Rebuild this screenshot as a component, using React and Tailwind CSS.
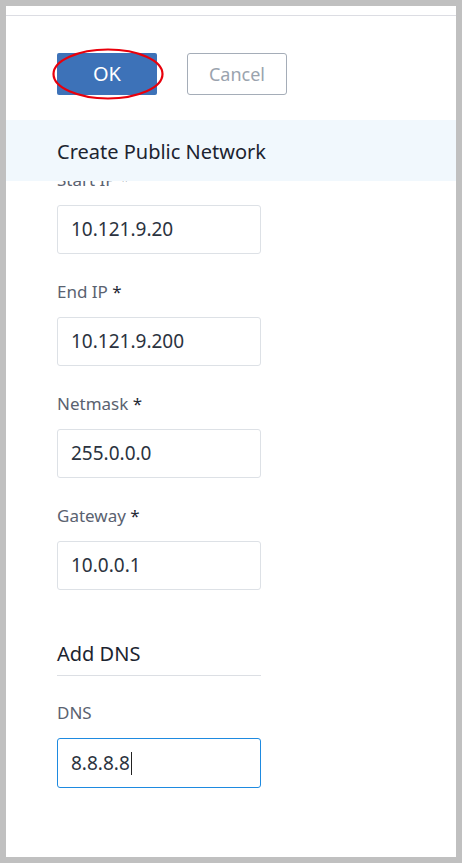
import React from "react";

const FIELDS = [
  { label: "End IP", value: "10.121.9.200" },
  { label: "Netmask", value: "255.0.0.0" },
  { label: "Gateway", value: "10.0.0.1" },
];

function Label({ children, required }) {
  return (
    <div className="h-[24px] text-[17px] leading-[24px] text-[#5a6270]">
      {children} {required && <span className="text-[#1f2a36]">*</span>}
    </div>
  );
}

function Input({ value }) {
  return (
    <div className="mt-[13px] w-[204px] h-[49px] border border-[#dde1e6] rounded-[3px] flex items-center px-[13px] text-[19px] text-[#2b3340]">
      {value}
    </div>
  );
}

export default function App() {
  return (
    <div
      className="w-[462px] h-[863px] bg-[#c0c0c0] p-[6px]"
      style={{ fontFamily: '"Noto Sans", "Open Sans", sans-serif' }}
    >
      <div className="w-full h-full bg-white overflow-hidden">
        <div className="h-[10px] border-b border-[#dcdde3]" />
        {/* buttons */}
        <div className="flex gap-[30px] pl-[51px] pt-[37px]">
          <div className="relative">
            <button className="w-[100px] h-[42px] bg-[#3d72b8] rounded-[2px] text-white text-[20px]">
              OK
            </button>
            <svg
              className="absolute left-[-5px] top-[-5px]"
              width="112"
              height="52"
              viewBox="0 0 112 52"
            >
              <ellipse cx="56" cy="26" rx="54.5" ry="24.5" fill="none" stroke="#e8000b" strokeWidth="2.2" />
            </svg>
          </div>
          <button className="w-[100px] h-[42px] border border-[#a5adb8] rounded-[3px] text-[#9aa3ae] text-[18px]">
            Cancel
          </button>
        </div>

        {/* form */}
        <div className="mt-[25px]">
          <div className="relative z-10 h-[61px] bg-[#f1f8fd] flex items-center pl-[51px] pt-[2px] text-[20px] text-[#1c2430]">
            Create Public Network
          </div>
          <div className="pl-[51px]">
            <div className="relative z-0 mt-[-13px]">
              <Label required>Start IP</Label>
              <Input value="10.121.9.20" />
            </div>
            {FIELDS.map((f) => (
              <div key={f.label} className="mt-[26px]">
                <Label required>{f.label}</Label>
                <Input value={f.value} />
              </div>
            ))}

            <div className="mt-[51px] w-[204px] border-b border-[#dcdfe4] pb-[8px] text-[20px] text-[#1c2430] leading-[26px]">
              Add DNS
            </div>
            <div className="mt-[25px]">
              <Label>DNS</Label>
            </div>
            <div className="mt-[13px] w-[204px] h-[50px] border border-[#1e8ae0] rounded-[3px] flex items-center px-[13px] text-[19px] text-[#2b3340]">
              8.8.8.8
              <span className="inline-block w-[1px] h-[23px] bg-[#222] ml-[1px]" />
            </div>
          </div>
        </div>
      </div>
    </div>
  );
}
